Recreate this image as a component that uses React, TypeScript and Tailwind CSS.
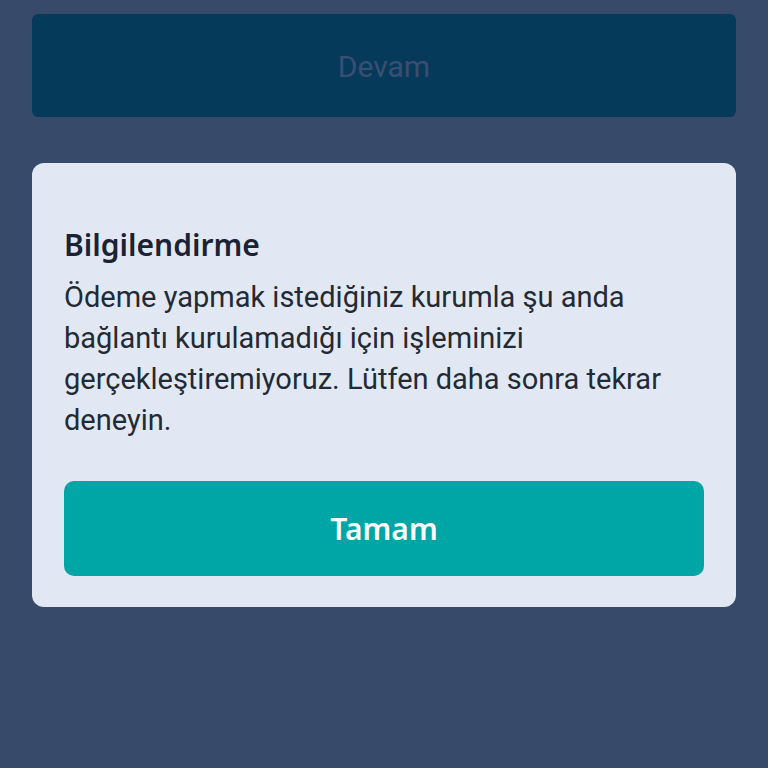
export default function App() {
  return (
    <div className="min-h-[768px] w-full bg-[#374a69] px-8 pt-[14px]">
      <button className="flex h-[103px] w-full items-center justify-center rounded-md bg-[#063a5a] pt-0.5 font-['Roboto','Liberation_Sans',sans-serif] text-[30px] text-[#3a4e70]">
        Devam
      </button>

      <div className="mt-[46px] rounded-xl bg-[#e2e8f3] px-8 pb-[31px] pt-[62px]">
        <h2 className="font-['Noto_Sans',Lato,sans-serif] text-[30px] font-semibold leading-10 text-[#1a2233]">
          Bilgilendirme
        </h2>
        <p className="mt-3 font-['Roboto','Liberation_Sans',sans-serif] text-[29px] leading-[41px] text-[#222a36]">
          Ödeme yapmak istediğiniz kurumla şu anda bağlantı kurulamadığı için işleminizi
          gerçekleştiremiyoruz. Lütfen daha sonra tekrar deneyin.
        </p>
        <button className="mt-10 flex h-[95px] w-full items-center justify-center rounded-[10px] bg-[#00a5a5] font-['Noto_Sans',Lato,sans-serif] text-[30px] font-semibold text-white">
          Tamam
        </button>
      </div>
    </div>
  );
}
